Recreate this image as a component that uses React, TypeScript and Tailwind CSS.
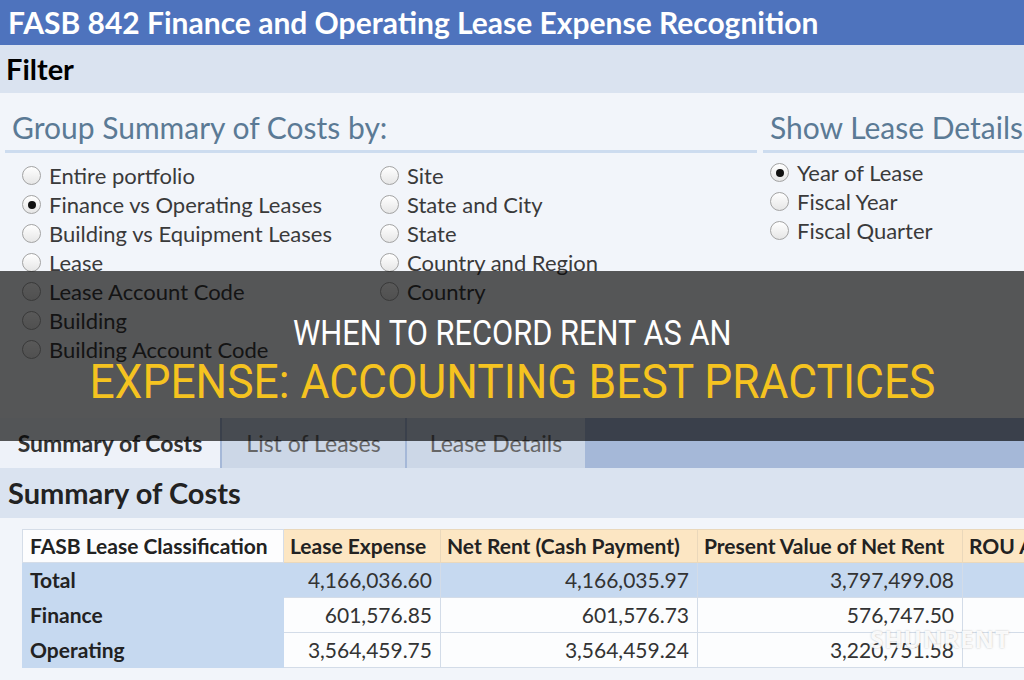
import React from "react";

type Opt = { label: string; checked?: boolean };

const groupLeft: Opt[] = [
  { label: "Entire portfolio" },
  { label: "Finance vs Operating Leases", checked: true },
  { label: "Building vs Equipment Leases" },
  { label: "Lease" },
  { label: "Lease Account Code" },
  { label: "Building" },
  { label: "Building Account Code" },
];

const groupRight: Opt[] = [
  { label: "Site" },
  { label: "State and City" },
  { label: "State" },
  { label: "Country and Region" },
  { label: "Country" },
];

const detailOpts: Opt[] = [
  { label: "Year of Lease", checked: true },
  { label: "Fiscal Year" },
  { label: "Fiscal Quarter" },
];

const rows = [
  { name: "Total", vals: ["4,166,036.60", "4,166,035.97", "3,797,499.08", ""] },
  { name: "Finance", vals: ["601,576.85", "601,576.73", "576,747.50", ""] },
  { name: "Operating", vals: ["3,564,459.75", "3,564,459.24", "3,220,751.58", ""] },
];

function Radio({ label, checked }: Opt) {
  return (
    <div className="h-[29px] flex items-center gap-[8px]">
      <span className="w-[19px] h-[19px] rounded-full border border-[#a3a3a3] bg-gradient-to-b from-white to-[#e6e6e6] flex items-center justify-center shrink-0">
        {checked && <span className="w-[8px] h-[8px] rounded-full bg-[#111]" />}
      </span>
      <span className="text-[22px] text-[#3a3a3a] whitespace-nowrap">{label}</span>
    </div>
  );
}

export default function App() {
  return (
    <div className="w-[1024px] h-[680px] relative overflow-hidden bg-[#f2f5fa] font-['Lato',sans-serif]">
      {/* Title bar */}
      <div className="h-[45px] bg-[#4e73bd] flex items-center pl-[8px]">
        <h1 className="text-[30px] font-bold text-white whitespace-nowrap">
          FASB 842 Finance and Operating Lease Expense Recognition
        </h1>
      </div>

      {/* Filter */}
      <div className="h-[48px] bg-[#dae3f0] flex items-center pl-[6px]">
        <span className="text-[29px] font-bold text-black">Filter</span>
      </div>

      <div className="h-[325px] flex">
        <div className="w-[752px] ml-[5px]">
          <div className="pt-[16px] pb-[5px] border-b-[3px] border-[#cddcef] pl-[7px]">
            <span className="text-[30px] leading-[36px] text-[#5b7a95] whitespace-nowrap">Group Summary of Costs by:</span>
          </div>
          <div className="flex pl-[17px] mt-[8px]">
            <div className="w-[358px]">
              {groupLeft.map((o) => (
                <Radio key={o.label} {...o} />
              ))}
            </div>
            <div>
              {groupRight.map((o) => (
                <Radio key={o.label} {...o} />
              ))}
            </div>
          </div>
        </div>
        <div className="flex-1 ml-[6px]">
          <div className="pt-[16px] pb-[5px] border-b-[3px] border-[#cddcef] pl-[7px]">
            <span className="text-[30px] leading-[36px] text-[#5b7a95] whitespace-nowrap">Show Lease Details</span>
          </div>
          <div className="pl-[7px] mt-[5px]">
            {detailOpts.map((o) => (
              <Radio key={o.label} {...o} />
            ))}
          </div>
        </div>
      </div>

      {/* Tabs */}
      <div className="h-[50px] bg-[#a5b8d8] flex gap-[2px]">
        <div className="w-[220px] bg-[#eef2f9] flex items-center justify-center text-[23px] font-bold text-[#333]">Summary of Costs</div>
        <div className="w-[183px] bg-[#ccd7e7] flex items-center justify-center text-[23px] text-[#666]">List of Leases</div>
        <div className="w-[178px] bg-[#ccd7e7] flex items-center justify-center text-[23px] text-[#666]">Lease Details</div>
      </div>

      <div className="h-[50px] bg-[#dae3f0] flex items-center pl-[8px]">
        <h2 className="text-[29px] font-bold text-[#222]">Summary of Costs</h2>
      </div>

      {/* Table */}
      <div className="pt-[11px] pl-[22px]">
        <table className="table-fixed border-collapse w-[1100px] text-[#333]">
          <colgroup>
            <col className="w-[261px]" />
            <col className="w-[157px]" />
            <col className="w-[257px]" />
            <col className="w-[265px]" />
            <col className="w-[160px]" />
          </colgroup>
          <thead>
            <tr className="h-[31px] text-[21px] font-bold text-[#222] whitespace-nowrap">
              <th className="bg-[#fdfdfe] text-left pl-[7px] border border-[#d5dde8]">FASB Lease Classification</th>
              <th className="bg-[#fce6c3] text-left pl-[6px] border border-[#ead8bb]">Lease Expense</th>
              <th className="bg-[#fce6c3] text-left pl-[6px] border border-[#ead8bb]">Net Rent (Cash Payment)</th>
              <th className="bg-[#fce6c3] text-left pl-[6px] border border-[#ead8bb]">Present Value of Net Rent</th>
              <th className="bg-[#fce6c3] text-left pl-[6px] border border-[#ead8bb]">ROU Asset Amortization</th>
            </tr>
          </thead>
          <tbody>
            {rows.map((r, i) => (
              <tr key={r.name} className="h-[35px] text-[21px]">
                <td className="bg-[#c6d9f0] pl-[7px] font-bold text-[21px] text-[#222] border border-[#c6d9f0]">{r.name}</td>
                {r.vals.map((v, j) => (
                  <td
                    key={j}
                    className={`text-right pr-[8px] border border-[#d3dce8] ${i === 0 ? "bg-[#c6d9f0]" : "bg-[#fcfdfe]"}`}
                  >
                    {v}
                  </td>
                ))}
              </tr>
            ))}
          </tbody>
        </table>
      </div>

      {/* Watermark */}
      <div className="absolute left-[870px] top-[621px] text-[24px] font-bold tracking-[1px] text-white/90 [text-shadow:0_0_2px_rgba(120,120,120,0.5)] font-['Open_Sans',sans-serif]">
        SHUNRENT
      </div>

      {/* Title overlay */}
      <div className="absolute inset-x-0 top-[271px] h-[170px] bg-black/65 flex flex-col items-center justify-center pt-[3px] font-['Roboto',sans-serif]">
        <div className="text-[35px] leading-[48px] text-white whitespace-nowrap scale-x-[0.88]">WHEN TO RECORD RENT AS AN</div>
        <div className="text-[49px] leading-[48px] text-[#f5c320] whitespace-nowrap scale-x-[0.905]">EXPENSE: ACCOUNTING BEST PRACTICES</div>
      </div>
    </div>
  );
}
